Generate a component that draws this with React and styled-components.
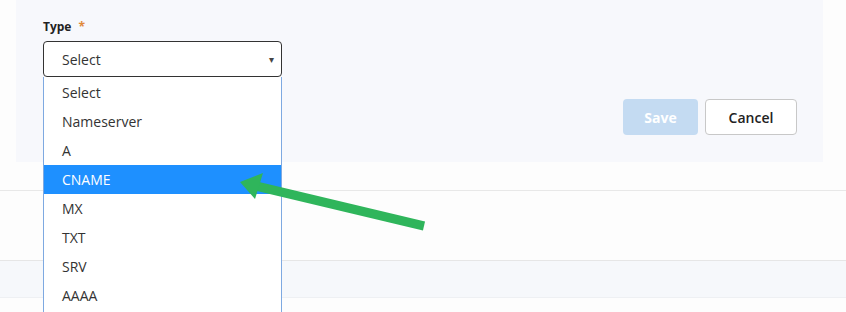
import React from "react";
import styled, { createGlobalStyle } from "styled-components";

const GlobalStyle = createGlobalStyle`
  html, body {
    margin: 0;
    padding: 0;
    background: #fdfdfd;
    font-family: "Open Sans", "Liberation Sans", sans-serif;
  }
`;

const options = ["Select", "Nameserver", "A", "CNAME", "MX", "TXT", "SRV", "AAAA"];

const App = () => {
  return (
    <Page>
      <GlobalStyle />
      <Panel>
        <Field>
          <Label>
            Type <Required>*</Required>
          </Label>
          <SelectWrap>
            <SelectBox>
              <span>Select</span>
              <Caret>▾</Caret>
            </SelectBox>
            <OptionList>
              {options.map((opt) => (
                <OptionItem key={opt} $active={opt === "CNAME"}>
                  {opt}
                </OptionItem>
              ))}
            </OptionList>
          </SelectWrap>
        </Field>
        <Actions>
          <SaveButton disabled>Save</SaveButton>
          <CancelButton>Cancel</CancelButton>
        </Actions>
      </Panel>
      <Divider />
      <Band />
      <Pointer width="846" height="312" viewBox="0 0 846 312">
        <line x1="424" y1="226" x2="256" y2="186" stroke="#2fb55b" strokeWidth="9" />
        <polygon points="240,182 263,173 255,199" fill="#2fb55b" />
      </Pointer>
    </Page>
  );
};

const Page = styled.div`
  position: relative;
  width: 846px;
  height: 312px;
  overflow: hidden;
  display: flex;
  flex-direction: column;
`;

const Panel = styled.div`
  margin: 0 23px 0 16px;
  height: 162px;
  flex-shrink: 0;
  background: #f7f8fc;
  display: flex;
  justify-content: space-between;
  align-items: flex-start;
  padding: 0 26px 0 27px;
  box-sizing: border-box;
  position: relative;
  z-index: 2;
`;

const Field = styled.div`
  display: flex;
  flex-direction: column;
  padding-top: 19px;
  width: 239px;
`;

const Label = styled.div`
  font-size: 12px;
  line-height: 16px;
  font-weight: 700;
  color: #222;
  height: 22px;
`;

const Required = styled.span`
  color: #e0893a;
  font-weight: 700;
  margin-left: 4px;
`;

const SelectWrap = styled.div`
  position: relative;
`;

const SelectBox = styled.div`
  height: 36px;
  box-sizing: border-box;
  border: 1px solid #333;
  border-radius: 4px;
  background: #fff;
  display: flex;
  align-items: center;
  justify-content: space-between;
  padding: 0 7px 0 18px;
  font-size: 14px;
  color: #333;
`;

const Caret = styled.span`
  font-size: 10px;
  color: #444;
`;

const OptionList = styled.div`
  position: absolute;
  top: 36px;
  left: 0;
  width: 239px;
  box-sizing: border-box;
  background: #fff;
  border: 1px solid #7ea9e1;
  border-top: none;
  padding: 1px 0 30px;
`;

const OptionItem = styled.div`
  height: 29px;
  line-height: 29px;
  padding-left: 18px;
  font-size: 14px;
  color: ${(p) => (p.$active ? "#fff" : "#333")};
  background: ${(p) => (p.$active ? "#1e90ff" : "#fff")};
`;

const Actions = styled.div`
  display: flex;
  gap: 7px;
  margin-top: 99px;
`;

const SaveButton = styled.button`
  width: 75px;
  height: 36px;
  border: none;
  border-radius: 4px;
  background: #c4dbf2;
  color: #fff;
  font-family: inherit;
  font-size: 14px;
  font-weight: 700;
`;

const CancelButton = styled.button`
  width: 92px;
  height: 36px;
  border: 1px solid #c8c8c8;
  border-radius: 4px;
  background: #fff;
  color: #222;
  font-family: inherit;
  font-size: 14px;
  font-weight: 600;
`;

const Divider = styled.div`
  margin-top: 28px;
  border-top: 1px solid #e8e8e8;
  height: 69px;
  flex-shrink: 0;
`;

const Band = styled.div`
  height: 36px;
  flex-shrink: 0;
  background: #f6f8fb;
  border-top: 1px solid #e6e6e6;
  border-bottom: 1px solid #eef0f3;
`;

const Pointer = styled.svg`
  position: absolute;
  top: 0;
  left: 0;
  z-index: 3;
  pointer-events: none;
`;

export default App;
